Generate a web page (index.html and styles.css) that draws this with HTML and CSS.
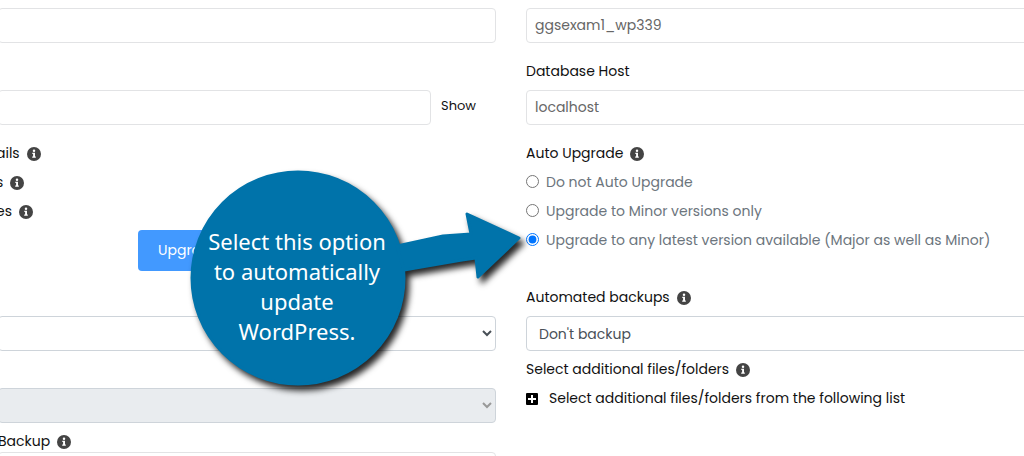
FILE: index.html
```html
<!DOCTYPE html>
<html lang="en">
<head>
<meta charset="utf-8">
<title>Database settings</title>
<meta name="viewport" content="width=device-width, initial-scale=1">
<link rel="stylesheet" href="styles.css">
</head>
<body>
<svg class="symbols" aria-hidden="true">
  <symbol id="info" viewBox="0 0 14 14">
    <circle cx="7" cy="7" r="7" fill="#444"/>
    <circle cx="7" cy="3.7" r="1.25" fill="#fff"/>
    <path d="M5.3 5.8h2.7v3.6h.8v1.3H5.2V9.400h.9V7.100h-.8z" fill="#fff"/>
  </symbol>
</svg>
<form class="form">
  <div class="column">
    <input class="field" type="text" aria-label="Database name">
    <div class="secret">
      <input class="field" type="password" aria-label="Password">
      <button class="show" type="button">Show</button>
    </div>
    <div class="notes">
      <p class="row">ails <svg class="info"><use href="#info"/></svg></p>
      <p class="row">s <svg class="info"><use href="#info"/></svg></p>
      <p class="row">es <svg class="info"><use href="#info"/></svg></p>
    </div>
    <button class="upgrade" type="button">Upgrade</button>
    <select class="field select first" aria-label="Schedule"><option></option></select>
    <select class="field select second" aria-label="Rotation" disabled><option></option></select>
    <label class="row compact" for="backup">Backup <svg class="info"><use href="#info"/></svg></label>
    <input class="field" id="backup" type="text">
  </div>
  <div class="column">
    <input class="field" type="text" value="ggsexam1_wp339" aria-label="Database user">
    <div class="group">
      <label class="row" for="host">Database Host</label>
      <input class="field spaced" id="host" type="text" value="localhost">
    </div>
    <fieldset class="options">
      <legend class="row">Auto Upgrade <svg class="info"><use href="#info"/></svg></legend>
      <label class="row choice"><input class="radio" type="radio" name="auto">Do not Auto Upgrade</label>
      <label class="row choice"><input class="radio" type="radio" name="auto">Upgrade to Minor versions only</label>
      <label class="row choice"><input class="radio" type="radio" name="auto" checked>Upgrade to any latest version available (Major as well as Minor)</label>
    </fieldset>
    <div class="backups">
      <label class="row" for="auto-backup">Automated backups <svg class="info"><use href="#info"/></svg></label>
      <select class="field select spaced" id="auto-backup"><option>Don't backup</option></select>
      <p class="row spaced">Select additional files/folders <svg class="info"><use href="#info"/></svg></p>
      <button class="row expand" type="button">
        <svg class="plus" viewBox="0 0 12 12"><rect width="12" height="12" rx="1"/><path d="M6 2v8M2 6h8" stroke="#fff" stroke-width="2"/></svg>
        Select additional files/folders from the following list
      </button>
    </div>
  </div>
</form>
<aside class="callout">
  <svg class="bubble" viewBox="0 0 350 240" aria-hidden="true">
    <g fill="#0073aa" stroke="#0073aa" stroke-width="3" stroke-linejoin="round">
      <circle cx="114" cy="113" r="106"/>
      <path d="M213 81L259 71L287 69L283 49L335 73L294 112L292 93L278 95L220 105Z"/>
    </g>
  </svg>
  <p class="message">Select this option<br>to automatically<br>update<br>WordPress.</p>
</aside>
</body>
</html>
```
FILE: styles.css
```css
* { box-sizing: border-box; }

body {
  margin: 0;
  min-height: 100vh;
  overflow: hidden;
  position: relative;
  background: #fff;
  color: #111;
  font: 14px/29px Poppins, Inter, sans-serif;
}

p { margin: 0; }

.symbols { display: none; }

.form {
  display: grid;
  grid-template-columns: minmax(0, 1fr) minmax(0, 1fr);
  gap: 30px;
  margin-left: -2px;
  padding-top: 8px;
  height: 100vh;
  overflow: hidden;
}

.column {
  display: flex;
  flex-direction: column;
}

.column:last-child { margin-right: -30px; }

.field {
  flex: none;
  width: 100%;
  height: 35px;
  margin: 0;
  padding: 0 8px;
  border: 1px solid #e2e3e5;
  border-radius: 4px;
  background: #fff;
  color: #666;
  font: inherit;
}

.select {
  border-color: #ced4da;
  color: #495057;
}

.select:disabled {
  background: #e9ecef;
  opacity: 1;
  color: #999;
}

.spaced { margin-top: 4px; }

.row {
  display: flex;
  align-items: center;
  gap: 7px;
  height: 29px;
  padding: 0;
}

.compact {
  flex: none;
  height: 21px;
  margin-top: 8px;
}

.info {
  flex: none;
  width: 14px;
  height: 14px;
}

.secret {
  display: flex;
  gap: 10px;
  margin-top: 47px;
}

.secret .field {
  flex: 1;
  min-width: 0;
}

.show {
  width: 55px;
  height: 31px;
  padding: 0;
  border: 0;
  background: none;
  color: inherit;
  font: inherit;
  font-size: 13px;
  text-align: left;
}

.notes {
  margin-top: 14px;
  margin-left: -2px;
}

.upgrade {
  align-self: center;
  width: 218px;
  height: 41px;
  margin-top: 4px;
  padding: 0 20px;
  border: 0;
  border-radius: 4px;
  background: #4299ff;
  color: #fff;
  font: inherit;
  text-align: left;
}

.first { margin-top: 45px; }

.second { margin-top: 37px; }

.group { margin-top: 14px; }

.options {
  margin: 14px 0 0;
  padding: 0;
  border: 0;
}

.choice {
  gap: 7px;
  color: #6c757d;
}

.radio {
  width: 13px;
  height: 13px;
  margin: 0 0 3px;
  accent-color: #0075ff;
}

.backups { margin-top: 28px; }

.expand {
  gap: 11px;
  border: 0;
  background: none;
  color: inherit;
  font: inherit;
}

.plus {
  width: 12px;
  height: 12px;
}

.callout {
  position: absolute;
  top: 165px;
  left: 184px;
  width: 350px;
  height: 240px;
}

.bubble {
  display: block;
  width: 350px;
  height: 240px;
  overflow: visible;
  filter: drop-shadow(4px 5px 3px rgba(0, 0, 0, 0.85));
}

.message {
  position: absolute;
  top: 61px;
  left: 8px;
  width: 210px;
  color: #fff;
  font: 22px/30px "Noto Sans", sans-serif;
  text-align: center;
}
```
